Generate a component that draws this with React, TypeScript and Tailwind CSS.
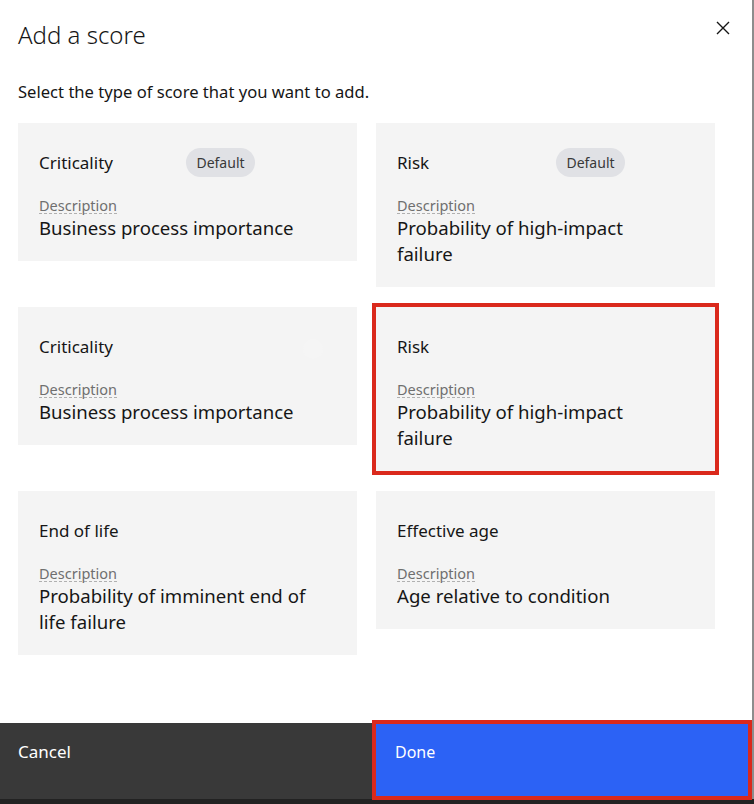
import clsx from "clsx";

type Score = {
  title: string;
  desc: string;
  tag?: boolean;
  titleW?: string;
  ghost?: boolean;
  selected?: boolean;
};

const scores: Score[] = [
  { title: "Criticality", desc: "Business process importance", tag: true, titleW: "w-[147px]" },
  { title: "Risk", desc: "Probability of high-impact failure", tag: true, titleW: "w-[159px]" },
  { title: "Criticality", desc: "Business process importance", ghost: true },
  { title: "Risk", desc: "Probability of high-impact failure", selected: true },
  { title: "End of life", desc: "Probability of imminent end of life failure" },
  { title: "Effective age", desc: "Age relative to condition" },
];

function ScoreCard({ title, desc, tag, titleW, ghost, selected }: Score) {
  return (
    <div
      className={clsx(
        "bg-[#f4f4f4] px-[21px] pt-[25px] pb-[20px]",
        selected && "outline-4 outline-[#da291c]"
      )}
    >
      <div className="flex h-[29px] items-center">
        <span className={clsx("text-[17px] text-[#161616]", titleW)}>{title}</span>
        {tag && (
          <span className="flex h-[29px] w-[69px] items-center justify-center rounded-full bg-[#e0e1e5] text-[14px] text-[#393939]">
            Default
          </span>
        )}
        {ghost && <span className="ml-auto mr-[13px] mt-[5px] h-5 w-5 rounded-full bg-[#f5f5f5]" />}
      </div>
      <div className="mt-[20px] flex">
        <span className="border-b border-dashed border-[#b0b0b0] text-[14.5px] leading-[16px] text-[#6f6f6f]">
          Description
        </span>
      </div>
      <p className="mt-[1px] max-w-[280px] text-[18.6px] leading-[26px] text-[#161616]">{desc}</p>
    </div>
  );
}

export default function App() {
  return (
    <div className="flex h-[804px] w-full flex-col bg-[#8d8d8d] font-['Noto_Sans',sans-serif]">
      <div className="flex h-[799px]">
        {/* modal */}
        <div className="flex h-full w-[752px] flex-col bg-white">
          <div className="flex items-start justify-between pl-[18px] pr-[22px] pt-[21px]">
            <h2 className="text-[24px] font-light leading-[28px] text-[#161616]">Add a score</h2>
            <button className="p-0 text-[#161616]">
              <svg width="14" height="14" viewBox="0 0 14 14" fill="none" stroke="currentColor" strokeWidth="1.4">
                <path d="M1 1 L13 13 M13 1 L1 13" />
              </svg>
            </button>
          </div>

          <p className="mt-[32px] pl-[18px] text-[16.6px] leading-[22px] text-[#161616]">
            Select the type of score that you want to add.
          </p>

          <div className="mt-[20px] grid w-[715px] grid-cols-2 items-start gap-x-[19px] gap-y-[20px] pl-[18px]">
            {scores.map((s, i) => (
              <ScoreCard key={i} {...s} />
            ))}
          </div>

          <div className="mt-auto grid h-[76px] grid-cols-[372px_1fr]">
            <button className="flex items-start bg-[#393939] pl-[18px] pt-[18px] text-left text-[17px] leading-[22px] text-white">
              Cancel
            </button>
            <div className="relative">
              <button className="flex h-full w-full items-start bg-[#2c62f5] pl-[23px] pt-[18px] text-left text-[16px] leading-[22px] text-white">
                Done
              </button>
              <span className="pointer-events-none absolute -top-[3px] bottom-[-1px] left-0 right-0 border-4 border-[#da291c]" />
            </div>
          </div>
        </div>
      </div>
      <div className="h-[5px] bg-[#222222]" />
    </div>
  );
}
